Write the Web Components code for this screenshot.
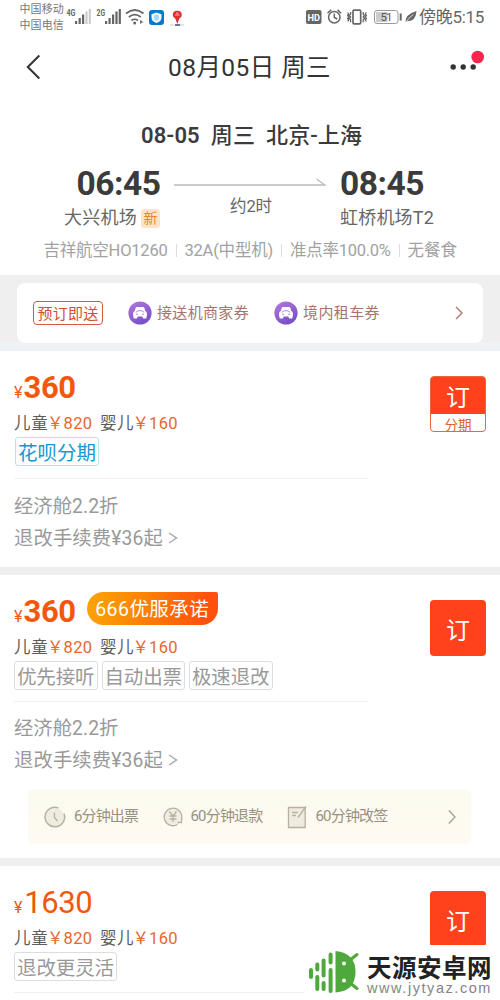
<!DOCTYPE html>
<html lang="zh-CN">
<head>
<meta charset="utf-8">
<title>航班预订</title>
<style>
html,body{margin:0;padding:0;background:#fff}
body{width:500px;height:1000px;overflow:hidden;font-family:Roboto,"Noto Sans CJK SC",sans-serif;color:#666}
</style>
</head>
<body>
<flight-page></flight-page>
<script>
const define=(name,html,setup)=>{
  const t=document.createElement('template');
  t.innerHTML=html;
  customElements.define(name,class extends HTMLElement{
    constructor(){super();this.attachShadow({mode:'open'}).append(t.content.cloneNode(true));}
    connectedCallback(){if(setup)setup(this,this.shadowRoot);}
  });
};

/* One line of text, tracked so that it fills the given width. */
define('fit-text',`<style>:host{display:block;flex:none;white-space:pre}span{display:inline-block}</style><span><slot></slot></span>`,(el,root)=>{
  const w=+el.getAttribute('w'),s=root.querySelector('span');
  if(!w)return;
  el.style.width=w+'px';
  const n=[...el.textContent].length;
  s.style.letterSpacing=((w-s.getBoundingClientRect().width)/n)+'px';
});

define('status-bar',`<style>
:host{display:flex;height:34px;align-items:center;box-sizing:border-box;padding:0 16px 0 19.5px;color:#777}
.ops{font-size:11px;line-height:15.5px;width:45px;padding-top:1px}
svg{display:block;flex:none}.l{flex:1}
.time{font-size:17px;line-height:34px;color:#666}
</style>
<div class="ops"><fit-text w="44.5">中国移动</fit-text><fit-text w="44.5">中国电信</fit-text></div>
<svg class="l" width="122" height="34" viewBox="65 0 122 34" preserveAspectRatio="xMinYMid meet">
 <g font-family="Roboto" font-weight="700" font-size="8.5" fill="#666"><text x="66.5" y="16" textLength="9" lengthAdjust="spacingAndGlyphs">4G</text><text x="96.5" y="16" textLength="8.5" lengthAdjust="spacingAndGlyphs">2G</text></g>
 <g fill="#666"><path d="M75 21h2.2v3H75zM78.600 18h2.200v6h-2.200zM82 14.500h2.200V24H82z"/><path fill="#c8c8c8" d="M85.500 11.500h2V24h-2zM88.800 9h2v15h-2z"/>
 <path d="M105 21h2.200v3H105zM108.500 18h2.200v6h-2.200zM112 14.500h2.200V24H112zM115.400 11.500h2.200V24h-2.200zM118.700 9h2.200v15h-2.200z"/></g>
 <g fill="none" stroke="#666" stroke-width="1.700"><path d="M126 13.500q8.700-7 17.500 0M128.800 17q6-4.700 12 0M131.500 20.500q3.200-2.500 6.500 0"/></g><circle cx="134.700" cy="23" r="1.500" fill="#666"/><path d="M140 20l3.500 2-3.500 2z" fill="#777"/>
 <rect x="149" y="10" width="15" height="15" rx="3" fill="#0878ca"/><path d="M156.500 12.500l5 1.700v3.300q0 4-5 5.500-5-1.500-5-5.500v-3.300z" fill="#eaf8ff"/><path d="M156.500 14.500l2.500 1v2.500q0 2-2.500 3-2.500-1-2.500-3v-2.500z" fill="#a5daf7"/>
 <path d="M170 24.700h4m6 0h4" stroke="#d6e6dd" stroke-width="2"/><path d="M175 25h5" stroke="#6676a0" stroke-width="2"/><path d="M177.300 24l-2-5.500q-2.500-1.200-2.500-3.600 0-4.100 4.500-4.100t4.500 4.100q0 2.400-2.500 3.600z" fill="#dc3034"/><path d="M175 15h4.500M176 13.200h2.500" stroke="#ffb3ae"/>
</svg>
<svg width="114" height="34" viewBox="304 0 114 34">
 <rect x="305" y="10" width="15.500" height="14" rx="2" fill="#666"/><text x="306.500" y="20.500" font-family="Roboto" font-weight="700" font-size="9" fill="#fff" textLength="12.500" lengthAdjust="spacingAndGlyphs">HD</text>
 <g fill="none" stroke="#666" stroke-width="1.500"><circle cx="333.300" cy="17.300" r="5.700"/><path d="M333.300 13.500v4l3 1.500M326.500 13.200l3.700-3.300M336.500 9.900l3.700 3.300"/></g>
 <g fill="none" stroke="#666"><rect x="352" y="10.200" width="7.700" height="13.600" rx="1" stroke-width="1.700"/><path stroke-width="1.300" d="M349.600 12v2.300l-1.500 1.300 1.500 1.400-1.500 1.400 1.500 1.400v2.500M346.600 12.500l1 1.500-1 1.500 1 1.500-1 1.500 1 1.500-1 1.500M362.200 12v2.300l1.500 1.300-1.500 1.400 1.500 1.400-1.500 1.400v2.500M365.400 12.500l-1 1.500 1 1.500-1 1.500 1 1.500-1 1.500 1 1.500"/></g>
 <rect x="373.500" y="10.500" width="23.500" height="13" rx="2.500" fill="#fff" stroke="#999"/><rect x="375" y="12" width="11.500" height="10" fill="#ccc"/><path d="M399.700 13.500v7" stroke="#666" stroke-width="2"/><text x="379.500" y="21" font-family="Roboto" font-size="11.500" fill="#555" textLength="12">51</text>
 <path d="M404.500 22.700q-.5-8.500 11-11.700-.5 10.500-9.500 10.200z" fill="#666"/><path d="M403.800 23.500q4-6 8.500-9" stroke="#fff" stroke-width=".8" fill="none"/>
</svg>
<fit-text class="time" w="65">傍晚5:15</fit-text>`);

define('nav-bar',`<style>
:host{display:flex;height:66px;align-items:center;padding:0 16px 0 25px}
svg{display:block;flex:none}fit-text{font-size:24.5px;line-height:68px;height:66px;color:#333;margin-left:125px}
.m{margin-left:auto}
</style>
<svg width="18" height="66" viewBox="25 34 18 66"><path d="M39.300 55.500L27.800 67l11.500 11.500" fill="none" stroke="#333" stroke-width="2"/></svg>
<fit-text w="163">08月05日 周三</fit-text>
<svg class="m" width="36" height="66" viewBox="448 34 36 66"><g fill="#333"><circle cx="453.200" cy="67" r="2.700"/><circle cx="463.200" cy="67" r="2.700"/><circle cx="473.200" cy="67" r="2.700"/></g><circle cx="477.700" cy="57" r="6.300" fill="#f8254d"/></svg>`);

define('flight-summary',`<style>
:host{display:block;height:175px;box-sizing:border-box;padding-top:20px}
.route{font-size:22px;font-weight:500;line-height:32px;color:#3b3b3b;margin-left:141px}
.route b{font-weight:600}
.legs{display:grid;grid-template-columns:110px 152px 110px;margin-left:64px;column-gap:7px;height:83px}
.t{font-size:33.5px;font-weight:700;line-height:40px;color:#3b3b3b;padding-top:12px}
.a{font-size:18px;line-height:28px}
.from .t{margin-left:12.500px}
.row{display:flex;align-items:center;gap:4px;height:28px}
.new{background:#fde3c8;color:#f08327;font-size:14px;line-height:18px;width:19px;height:19px;border-radius:3px;text-align:center}
.mid{display:flex;flex-direction:column;align-items:flex-start;padding-top:22px}
.mid svg{display:block;margin-left:-7px}.mid fit-text{font-size:16.500px;line-height:26px;margin-left:49px;margin-top:4px}
.info{display:flex;align-items:center;height:26px;margin:2px 0 0 43.500px;font-size:16.500px;color:#a2a2a2;line-height:27px}
i{width:1px;height:13px;background:#ddd}
</style>
<fit-text class="route" w="221"><b>08-05</b>  周三  北京-上海</fit-text>
<div class="legs">
 <div class="from"><fit-text class="t" w="84">06:45</fit-text><div class="row"><fit-text class="a" w="73">大兴机场</fit-text><div class="new">新</div></div></div>
 <div class="mid"><svg width="152" height="16" viewBox="174 174 152 16"><path d="M174 185h151l-8.500-6" fill="none" stroke="#bbb" stroke-width="1.300"/></svg><fit-text w="42">约2时</fit-text></div>
 <div class="to"><fit-text class="t" w="84">08:45</fit-text><div class="row"><fit-text class="a" w="94">虹桥机场T2</fit-text></div></div>
</div>
<div class="info"><fit-text w="124">吉祥航空HO1260</fit-text><i style="margin:0 8px"></i><fit-text w="88.5">32A(中型机)</fit-text><i style="margin:0 8px"></i><fit-text w="100.5">准点率100.0%</fit-text><i style="margin:0 8px"></i><fit-text w="49.5">无餐食</fit-text></div>`);

define('coupon-item',`<style>
:host{display:flex;align-items:center;gap:5px;color:#a97468;font-size:15px;line-height:25px}svg{display:block}
</style>
<svg width="24" height="24" viewBox="0 0 24 24"><defs><linearGradient id="g" x1="0" y1="0" x2=".5" y2="1"><stop stop-color="#b777dd"/><stop offset="1" stop-color="#7850ca"/></linearGradient></defs><circle cx="12" cy="12" r="11.600" fill="url(#g)"/><path d="M9 6h6q1.200 0 1.500 1.300l.6 2.400q1.900 1 1.900 3.300 0 2.500-.8 4.500h-3l-.9-2H9.700l-.9 2h-3Q5 15.500 5 13q0-2.300 1.900-3.300l.6-2.400Q7.800 6 9 6z" fill="#fff"/><path d="M7.800 11.300q4.200-3.400 8.400 0M8 13.300h2M14 13.300h2" stroke="#b48be0" fill="none"/></svg>
<slot></slot>`);

define('coupon-bar',`<style>
:host{display:block;height:76px;box-sizing:border-box;padding:8px 17px;background:linear-gradient(#efefef 67px,#eef1f5 67px)}
.c{display:flex;align-items:center;height:60px;border-radius:8px;background:#fff;box-sizing:border-box;padding:0 20px 0 16px}
.b{border:1.500px solid #d35a3d;border-radius:4px;height:24px;box-sizing:border-box;width:70px;padding-left:3.500px;font-size:15px;line-height:24px;color:#cf4f30}
svg{display:block;margin-left:auto}
</style>
<div class="c"><div class="b"><fit-text w="61">预订即送</fit-text></div>
<coupon-item style="margin-left:25px"><fit-text w="92">接送机商家券</fit-text></coupon-item>
<coupon-item style="margin-left:25px"><fit-text w="77">境内租车券</fit-text></coupon-item>
<svg width="8" height="14" viewBox="0 0 8 14"><path d="M1 1l6 6-6 6" fill="none" stroke="#b67e6e" stroke-width="1.500"/></svg></div>`);

define('tag-label',`<style>
:host{display:block;box-sizing:border-box;height:29px;border:1px solid #ddd;border-radius:3px;padding:0 2px;font-size:19.500px;line-height:31px;color:#999}
:host([blue]){border-color:#b9e3ef;color:#1598cf}
</style><slot></slot>`);

define('book-button',`<style>
:host{display:flex;flex-direction:column;box-sizing:border-box;width:56px;height:56px;border-radius:4px;overflow:hidden;background:#ff421c;color:#fff;font-size:24px;text-align:center;line-height:62px}
.s{display:none}
:host([split]){line-height:42px;border:1px solid #e8673c}
:host([split]) .s{display:block;background:#fff;color:#d8622b;height:17px;font-size:13.500px;line-height:22px;margin-top:auto;overflow:hidden}
.m{height:37px}
</style><div class="m">订</div><div class="s"><slot></slot></div>`);

define('fare-card',`<style>
:host{display:block;box-sizing:border-box;border-bottom:8px solid #efefef;background:#fff;padding-left:14px}
.top{display:grid;grid-template-columns:1fr 70px;height:var(--top,126px);width:486px}
.price{display:flex;align-items:baseline;height:37px;color:#f2570d;line-height:37px}
.y{font-size:16px}.p{font-size:31px;font-weight:700;margin-left:.5px}
:host([light]) .p{font-weight:400;margin-left:1.2px}
.kids{display:flex;font-size:16.500px;height:26px;line-height:26px;margin-top:4.500px;color:#5c5c5c}
.kids .o{color:#e8662e}
.kids .c{margin:0 1.500px 0 -1.500px}
.head{display:flex;height:37px}
.tags{display:flex;gap:4px;margin-top:.5px}
.left{padding-top:18px}
::slotted(book-button){margin-top:25px}
.rule{width:354px;height:1px;background:#f0f0f0}
.detail{font-size:19.300px;color:#999;line-height:32px;padding-top:var(--gap,11px)}
:host([brief]) .detail{display:none}
.r{display:flex;align-items:center;gap:5px}
.r svg{margin-top:-2px}
</style>
<div class="top"><div class="left"><div class="head"><div class="price"><fit-text class="y" w="9">¥</fit-text><fit-text class="p">x</fit-text></div><slot name="badge"></slot></div>
<div class="kids"><fit-text w="34.5">儿童</fit-text><fit-text class="o c" w="15">￥</fit-text><fit-text class="o" w="29">820</fit-text><fit-text w="34" style="margin-left:7.5px">婴儿</fit-text><fit-text class="o c" w="15">￥</fit-text><fit-text class="o" w="29">160</fit-text></div>
<div class="tags"><slot name="tags"></slot></div></div><slot name="book"></slot></div>
<div class="rule"></div>
<div class="detail"><fit-text w="104.5">经济舱2.2折</fit-text><div class="r"><fit-text w="149">退改手续费¥36起</fit-text><svg width="10" height="12" viewBox="0 0 10 12"><path d="M1 1l7.500 5L1 11" fill="none" stroke="#aaa" stroke-width="1.500"/></svg></div></div>
<slot></slot>`,(el,root)=>{
  const p=root.querySelector('.p');
  p.textContent=el.getAttribute('price');
  p.shadowRoot.querySelector('span').style.letterSpacing=(+el.getAttribute('track')||0)+'px';
});

define('service-badge',`<style>
:host{display:block;box-sizing:border-box;width:131px;height:33px;margin-left:11.500px;margin-top:-1px;padding-left:8px;border-radius:17px 2px 17px 17px;background:linear-gradient(100deg,#fca506,#fb8504 40%,#ff500d 90%);color:#fff;font-size:19.500px;line-height:35px}
</style><fit-text w="114">666优服承诺</fit-text>`);

define('service-strip',`<style>
:host{display:flex;align-items:center;box-sizing:border-box;width:443px;height:55px;border-radius:6px;background:linear-gradient(#fafbf0,#fffaf1 75%);color:#98917f;font-size:15px;line-height:25px;padding:0 15px 0 16px}
svg{display:block;flex:none}
</style>
<svg width="22" height="22" viewBox="0 0 22 22" fill="none" stroke="#b8b1a0"><path d="M14.500 1.900A9.800 9.800 0 1 0 20 7.500" stroke-width="1.500" fill="#eeebe0"/><path d="M10.500 6.500v5l3 3.500" stroke-width="1.300"/></svg>
<fit-text w="64" style="margin-left:8px">6分钟出票</fit-text>
<svg style="margin-left:24.5px" width="20" height="20" viewBox="0 0 20 20" fill="none" stroke="#b8b1a0" stroke-width="1.300"><path d="M14.500 17.500A8.800 8.800 0 1 1 18.800 10v3" fill="#f0ede2"/><path d="M6.300 4.500L10 9l3.500-4.500M6.500 9h7M6.500 12h7M10 9v6"/><path d="M14.500 15.500h4v-3" /></svg>
<fit-text w="72" style="margin-left:8px">60分钟退款</fit-text>
<svg style="margin-left:24px" width="21" height="24" viewBox="0 0 21 24" fill="none" stroke="#b8b1a0" stroke-width="1.300"><path d="M1.500 2.500h16.700v20H1.500z" fill="#eeebe0"/><path d="M5 7.500h6M5 10.500h4M11 12.500L19 1.500" /></svg>
<fit-text w="72" style="margin-left:8px">60分钟改签</fit-text>
<svg style="margin-left:auto" width="8" height="16" viewBox="0 0 8 16"><path d="M.8 1.500L7 8 .8 14.500" fill="none" stroke="#aaa599" stroke-width="1.500"/></svg>`);

define('site-mark',`<style>
:host{position:absolute;left:304px;top:945px;width:196px;height:55px;display:flex;background:#fff}
svg{display:block;flex:none}.w{margin-left:3px}
.n{font-family:"Noto Sans CJK SC",sans-serif;font-weight:700;font-size:24.500px;line-height:26px;height:26px;color:#222;margin-top:8.500px}
.u{font-family:"Liberation Sans",sans-serif;font-size:14.500px;line-height:16px;height:16px;color:#858585}
</style>
<svg width="60" height="55" viewBox="304 945 60 55"><g stroke="#4fa83b" stroke-width="4" stroke-linecap="round"><path d="M311 970v7M317.300 964.500v5M317.300 977v12M323.600 960.500v15M323.600 983v6M330.600 954.500v8M330.600 970v21" /><path d="M350 960l7-5.500M350 983l7 5.500" stroke-width="3"/></g><path d="M335.500 951q20 2 20 21t-20 20.500z" fill="#4fa83b"/><circle cx="344" cy="963.500" r="2" fill="#fff"/><circle cx="344" cy="980.500" r="2" fill="#fff"/></svg>
<div class="w"><fit-text class="n" w="125">天源安卓网</fit-text><fit-text class="u" w="125">www.jytyaz.com</fit-text></div>`);

define('flight-page',`<style>
:host{display:block;position:relative;width:500px;height:1000px;overflow:hidden;background:#fff}
</style>
<status-bar></status-bar><nav-bar></nav-bar><flight-summary></flight-summary><coupon-bar></coupon-bar>
<fare-card price="360" track="-.4" style="height:224px;--top:127px;--gap:11.5px">
 <tag-label slot="tags" blue style="margin-left:1px"><fit-text w="78">花呗分期</fit-text></tag-label>
 <book-button slot="book" split>分期</book-button>
</fare-card>
<fare-card price="360" track="-.4" style="height:291px">
 <service-badge slot="badge"></service-badge>
 <tag-label slot="tags"><fit-text w="77.5">优先接听</fit-text></tag-label><tag-label slot="tags"><fit-text w="77.5">自动出票</fit-text></tag-label><tag-label slot="tags"><fit-text w="77.5">极速退改</fit-text></tag-label>
 <book-button slot="book"></book-button>
 <service-strip style="margin:12px 0 0 14px"></service-strip>
</fare-card>
<fare-card price="1630" track="-.4" light brief style="height:260px">
 <tag-label slot="tags"><fit-text w="97">退改更灵活</fit-text></tag-label>
 <book-button slot="book"></book-button>
</fare-card>
<site-mark></site-mark>`);
</script>
</body>
</html>
